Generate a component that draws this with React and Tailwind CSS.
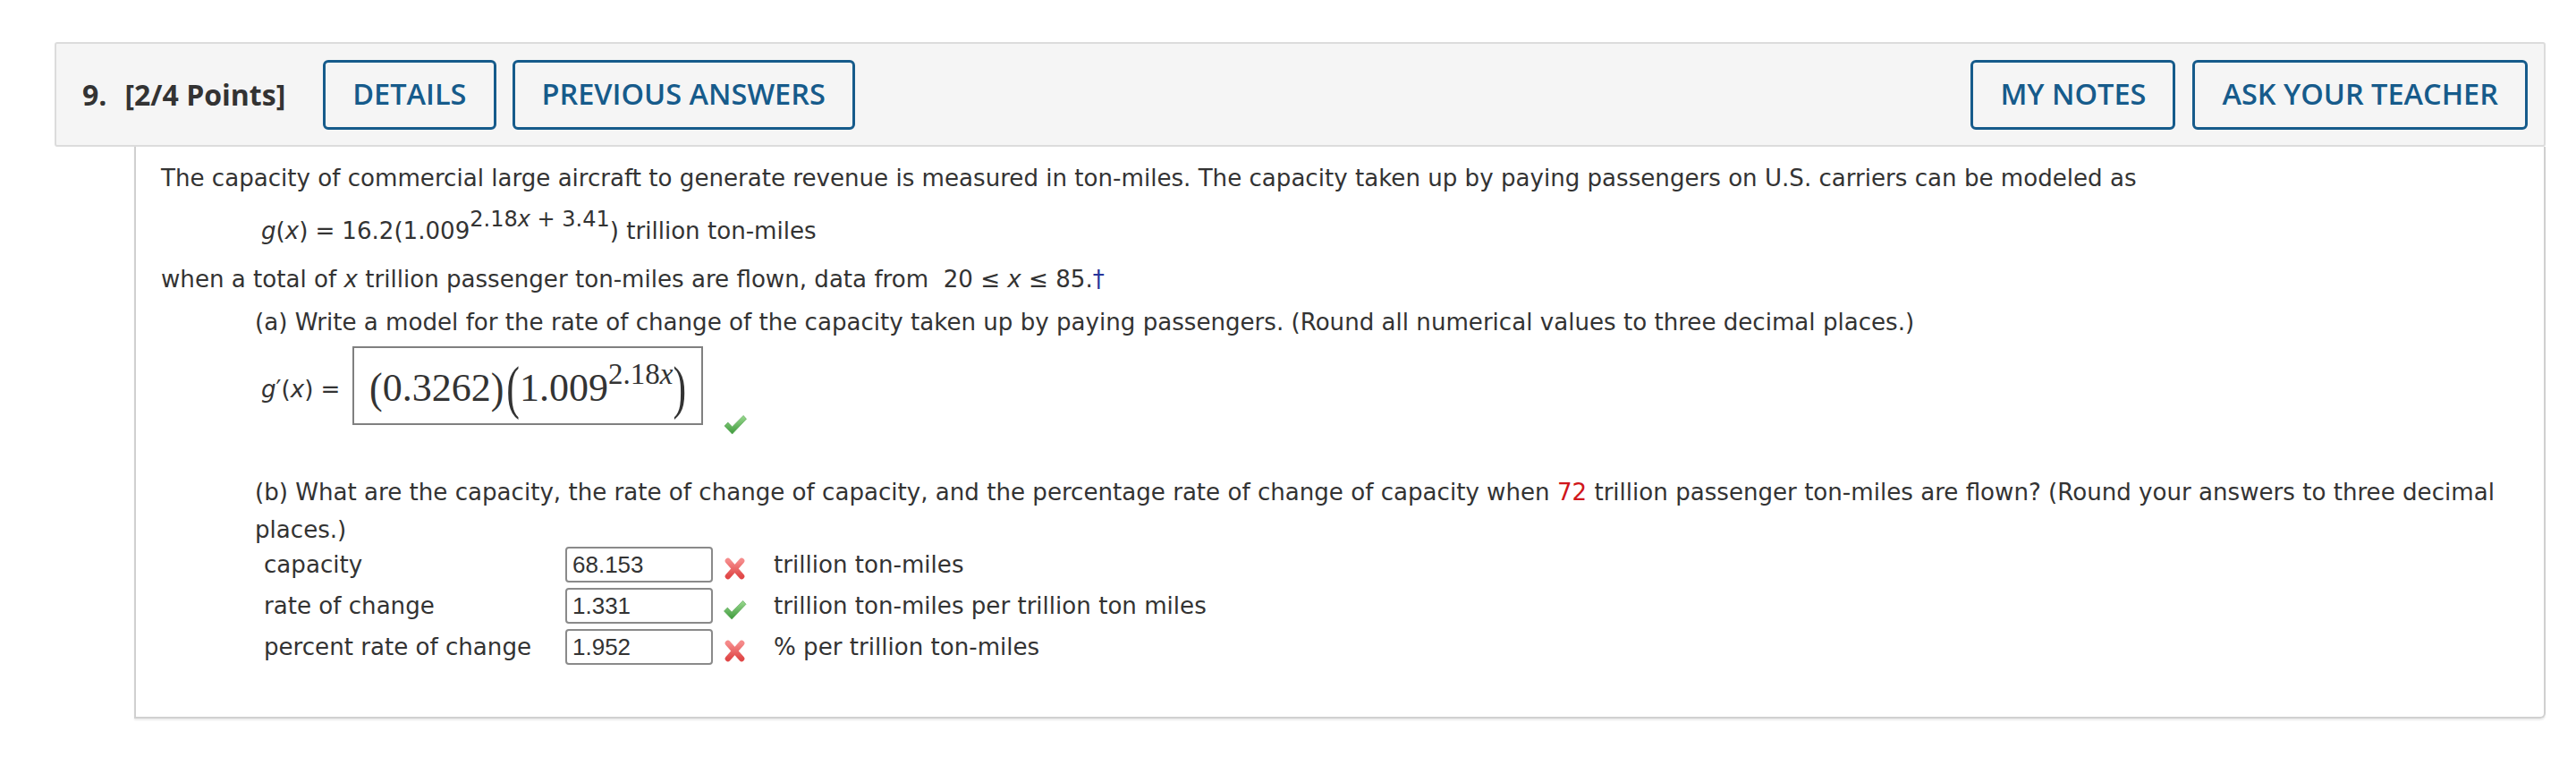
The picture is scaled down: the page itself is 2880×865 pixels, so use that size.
import React from 'react';

function CheckIcon({ className = '' }) {
  return (
    <svg viewBox="0 0 28 26" className={className}>
      <defs>
        <linearGradient id="chk" x1="0" y1="0" x2="0" y2="1">
          <stop offset="0" stopColor="#9ad98f" />
          <stop offset="1" stopColor="#3e9a3c" />
        </linearGradient>
      </defs>
      <path d="M1.5 14.5 L5.5 10.5 L10.5 15.5 L23.5 2.5 L27 6.5 L10.5 24 Z" fill="url(#chk)" stroke="#4a9e46" strokeWidth="0.6" strokeLinejoin="round" />
    </svg>
  );
}

function CrossIcon({ className = '' }) {
  return (
    <svg viewBox="0 0 28 28" className={className}>
      <defs>
        <linearGradient id="crs" x1="0" y1="0" x2="0" y2="1">
          <stop offset="0" stopColor="#f58a8a" />
          <stop offset="1" stopColor="#e04848" />
        </linearGradient>
      </defs>
      <g stroke="url(#crs)" strokeWidth="6.5" strokeLinecap="round">
        <line x1="6" y1="5" x2="22" y2="23" />
        <line x1="22" y1="5" x2="6" y2="23" />
      </g>
    </svg>
  );
}

function HeaderButton({ children }) {
  return (
    <div className="flex h-[78px] items-center rounded-[6px] border-[3px] border-[#165b8b] px-[30px] text-[32.5px] font-semibold text-[#165b8b]">
      {children}
    </div>
  );
}

const rows = [
  { label: 'capacity', value: '68.153', ok: false, unit: 'trillion ton-miles' },
  { label: 'rate of change', value: '1.331', ok: true, unit: 'trillion ton-miles per trillion ton miles' },
  { label: 'percent rate of change', value: '1.952', ok: false, unit: '% per trillion ton-miles' },
];

export default function App() {
  return (
    <div className="min-h-[865px] w-[2880px] bg-white pt-[47px] text-[#333]">
      {/* question header */}
      <div className="ml-[61px] mr-[34px] flex h-[117px] items-center justify-between rounded-[3px] border-2 border-[#dcdcdc] bg-[#f5f5f5] pl-[29px] pr-[18px] font-['Open_Sans',sans-serif]">
        <div className="flex items-center">
          <div className="flex items-center text-[32px] font-bold text-[#333]">
            <span>9.</span>
            <span className="ml-[20px]">[2/4 Points]</span>
          </div>
          <div className="ml-[42px] flex gap-[18px]">
            <HeaderButton>DETAILS</HeaderButton>
            <HeaderButton>PREVIOUS ANSWERS</HeaderButton>
          </div>
        </div>
        <div className="flex gap-[19px]">
          <HeaderButton>MY NOTES</HeaderButton>
          <HeaderButton>ASK YOUR TEACHER</HeaderButton>
        </div>
      </div>

      {/* question body */}
      <div className="ml-[150px] mr-[34px] rounded-br-[6px] border-x-2 border-b-2 border-[#d0d0d0] pb-[55px] pl-[28px] pt-[15px] font-['DejaVu_Sans',Verdana,sans-serif] text-[26.1px] leading-[40px] text-[#333] shadow-[0_2px_2px_rgba(0,0,0,0.08)]">
        <div className="whitespace-nowrap">
          The capacity of commercial large aircraft to generate revenue is measured in ton-miles. The capacity taken up by paying passengers on U.S. carriers can be modeled as
        </div>
        <div className="ml-[112px] mt-[19px] whitespace-nowrap">
          <i>g</i>(<i>x</i>)<span className="mx-[8px]">=</span>16.2(1.009<sup className="top-[-14px] text-[24px]">2.18<i>x</i> + 3.41</sup>) trillion ton-miles
        </div>
        <div className="mt-[14px] whitespace-nowrap">
          when a total of <i>x</i> trillion passenger ton-miles are flown, data from&nbsp; 20 ≤ <i>x</i> ≤ 85.<span className="text-[#26349a]">†</span>
        </div>

        <div className="ml-[105px] mt-[8px] whitespace-nowrap">
          (a) Write a model for the rate of change of the capacity taken up by paying passengers. (Round all numerical values to three decimal places.)
        </div>
        <div className="ml-[112px] mt-[7px] flex items-start">
          <div className="mt-[28px] w-[102px] whitespace-nowrap">
            <i>g</i>′(<i>x</i>) =
          </div>
          <div className="flex h-[88px] w-[392px] items-center border-2 border-[#808080] pl-[17px]">
            <span className="mt-[6px] whitespace-nowrap font-['Liberation_Serif',serif] text-[44px] leading-[40px] text-[#333]">
              <span className="inline-block scale-y-[1.12]">(</span>0.3262<span className="inline-block scale-y-[1.12]">)</span>
              <span className="ml-[3px] inline-block scale-y-[1.5]">(</span>1.009
              <span className="relative top-[-19px] text-[33px] leading-none">2.18<i>x</i></span>
              <span className="inline-block scale-y-[1.5]">)</span>
            </span>
          </div>
          <CheckIcon className="ml-[22px] mt-[75px] h-[25px] w-[28px]" />
        </div>

        <div className="ml-[105px] mt-[42px] leading-[42px]">
          <div className="whitespace-nowrap">
            (b) What are the capacity, the rate of change of capacity, and the percentage rate of change of capacity when <span className="text-[#d0161b]">72</span> trillion passenger ton-miles are flown? (Round your answers to three decimal
          </div>
          <div>places.)</div>
        </div>

        <div className="ml-[105px] mt-[-5px]">
          {rows.map((r) => (
            <div key={r.label} className="flex h-[46px] items-center whitespace-nowrap">
              <div className="w-[347px] pl-[10px]">{r.label}</div>
              <div className="flex h-[40px] w-[165px] items-center rounded-[4px] border-2 border-[#8a8a8a] px-[6px] font-['Liberation_Sans',Arial,sans-serif] text-[26px] leading-none">
                {r.value}
              </div>
              <div className="ml-[11px] mt-[8px] flex h-[27px] w-[27px] items-center justify-center">
                {r.ok ? <CheckIcon className="h-[25px] w-[28px]" /> : <CrossIcon className="h-[27px] w-[27px]" />}
              </div>
              <div className="ml-[30px]">{r.unit}</div>
            </div>
          ))}
        </div>
      </div>
    </div>
  );
}
